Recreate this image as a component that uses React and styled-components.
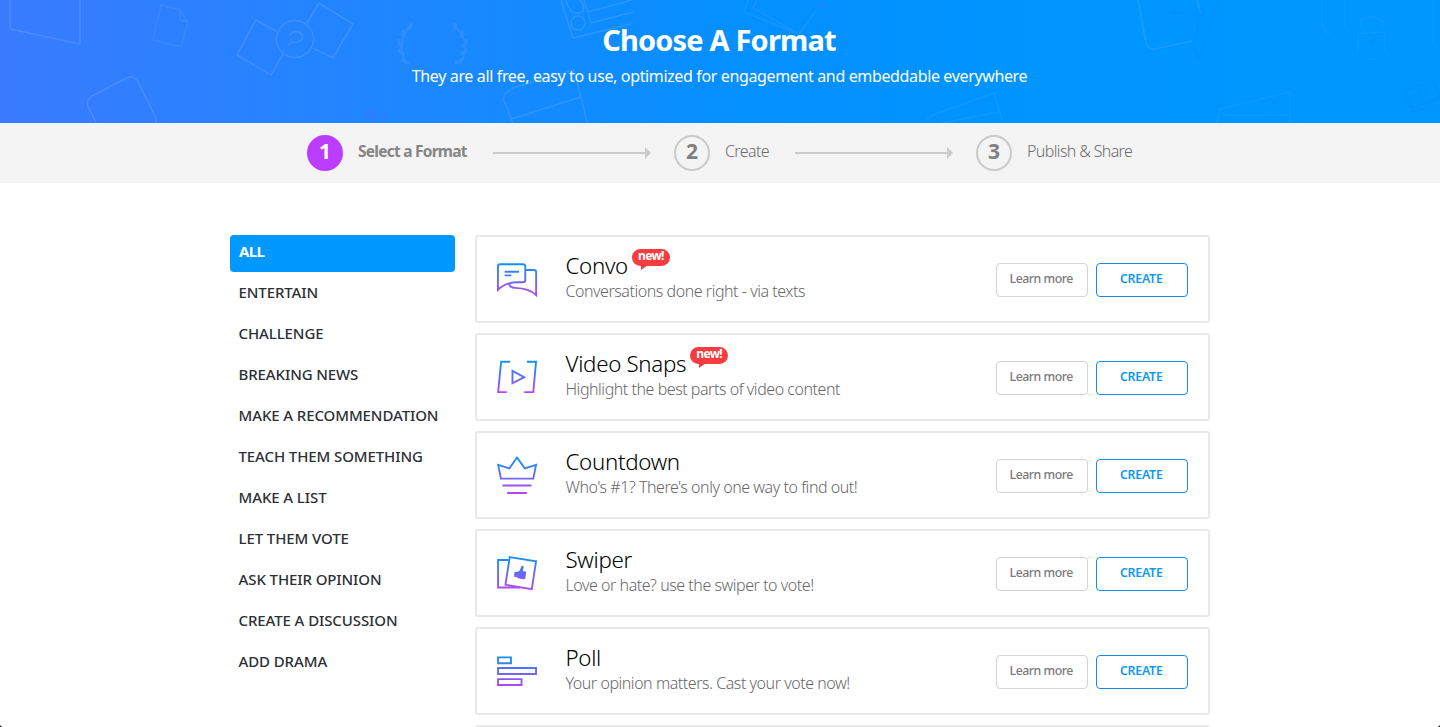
import React from "react";
import styled, { createGlobalStyle } from "styled-components";

const GlobalStyle = createGlobalStyle`
  * { box-sizing: border-box; }
  html, body { margin: 0; background: #000; }
  body { font-family: "Noto Sans", "Open Sans", sans-serif; }
`;

const Page = styled.div`
  height: 727px;
  overflow: hidden;
  background: #fff;
  border-radius: 0 0 3px 3px;
`;

const Header = styled.header`
  position: relative;
  height: 123px;
  padding-top: 20px;
  text-align: center;
  color: #fff;
  background: linear-gradient(90deg, #397bff 0, #2a81ff 220px, #1a88ff 450px, #058fff 720px, #0094ff 1000px, #0098ff 1440px);
`;

const Doodles = styled.svg`
  position: absolute;
  inset: 0;
  fill: none;
  stroke: #fff;
  stroke-width: 1.5;
`;

const Title = styled.h1`
  position: relative;
  margin: 0 0 4px;
  font-size: 29px;
  line-height: 40px;
  font-weight: 700;
  letter-spacing: -0.82px;
  text-indent: -2px;
`;

const Subtitle = styled.p`
  position: relative;
  margin: 0;
  font-size: 16px;
  line-height: 24px;
  letter-spacing: -0.36px;
  text-indent: -1px;
`;

const Steps = styled.nav`
  display: grid;
  grid-template-columns: 36px 150px 181px 36px 85px 181px 36px auto;
  align-items: start;
  height: 60px;
  padding: 12px 0 0 307px;
  background: #f4f4f4;
`;

const StepNumber = styled.span`
  width: 36px;
  height: 36px;
  border: 2px solid ${(p) => (p.$active ? "#bb3dff" : "#cbcbcb")};
  border-radius: 50%;
  background: ${(p) => (p.$active ? "#bb3dff" : "transparent")};
  color: ${(p) => (p.$active ? "#fff" : "#808080")};
  font-size: 21px;
  line-height: 28px;
  font-weight: 700;
  text-align: center;
`;

const StepLabel = styled.span`
  padding-left: 15px;
  font-size: ${(p) => (p.$active ? "15.5px" : "16px")};
  line-height: ${(p) => (p.$active ? "32px" : "33px")};
  font-weight: ${(p) => (p.$active ? 700 : 300)};
  letter-spacing: ${(p) => (p.$active ? "-0.75px" : "-0.62px")};
  color: ${(p) => (p.$active ? "#858585" : "#6c6c6c")};
  white-space: nowrap;
`;

const Arrow = styled.span`
  display: flex;
  align-items: center;
  width: 158px;
  height: 36px;

  &::before {
    content: "";
    flex: 1;
    height: 2px;
    background: #cbcbcb;
  }
  &::after {
    content: "";
    border: 6px solid transparent;
    border-left-color: #cbcbcb;
    border-right-width: 0;
  }
`;

const Content = styled.main`
  display: flex;
  gap: 20px;
  padding: 52px 230px 0;
`;

const Sidebar = styled.aside`
  display: flex;
  flex-direction: column;
  gap: 4px;
  flex: 0 0 225px;
`;

const Category = styled.a`
  height: 37px;
  padding-left: ${(p) => (p.$active ? "9px" : "8.5px")};
  border-radius: 4px;
  background: ${(p) => (p.$active ? "#0099ff" : "transparent")};
  color: ${(p) => (p.$active ? "#fff" : "#2d3035")};
  font-size: 15px;
  line-height: 33px;
  font-weight: ${(p) => (p.$active ? 700 : 500)};
  letter-spacing: ${(p) => (p.$active ? "-0.6px" : "-0.1px")};
  white-space: nowrap;
`;

const List = styled.section`
  display: flex;
  flex-direction: column;
  gap: 10px;
  flex: 1;
`;

const Card = styled.article`
  display: flex;
  flex: 0 0 88px;
  align-items: flex-start;
  padding: 15px 20px 0 18px;
  border: 2px solid #e9e9e9;
  border-radius: 3px;
`;

const IconBox = styled.svg`
  width: 44px;
  height: 44px;
  margin-top: 5px;
  fill: none;
  stroke-width: 1.9;
`;

const Copy = styled.div`
  flex: 1;
  padding-left: 26.5px;
`;

const Name = styled.h2`
  display: flex;
  gap: 4px;
  margin: 0;
  font-size: 22.3px;
  line-height: 27px;
  font-weight: 300;
  letter-spacing: -0.3px;
  color: #000;
`;

const Description = styled.p`
  margin: 0;
  font-size: 16px;
  line-height: 24px;
  font-weight: 300;
  letter-spacing: -0.46px;
  color: #686868;
`;

const NewBadge = styled.span`
  position: relative;
  width: 38px;
  height: 17px;
  margin-top: -3px;
  border-radius: 9px;
  background: #f63c3f;
  color: #fff;
  font-size: 12px;
  line-height: 14px;
  font-weight: 700;
  letter-spacing: -0.65px;
  text-align: center;

  &::after {
    content: "";
    position: absolute;
    left: 9px;
    top: 16px;
    border-top: 5px solid #f63c3f;
    border-right: 7px solid transparent;
  }
`;

const Actions = styled.div`
  display: flex;
  gap: 8px;
  padding-top: 11px;
`;

const Button = styled.button`
  width: 92px;
  height: 34px;
  padding: 0 1.5px 3px 0;
  border: 1px solid ${(p) => (p.$primary ? "#0e8df0" : "#d4d4d4")};
  border-radius: 4px;
  background: #fff;
  color: ${(p) => (p.$primary ? "#0e97f5" : "#7a7a7a")};
  font: ${(p) => (p.$primary ? 600 : 500)} 12.3px/29px "Noto Sans", sans-serif;
  letter-spacing: ${(p) => (p.$primary ? "-0.2px" : "-0.45px")};
`;

const icons = {
  convo: (
    <>
      <path d="M2.7 33V9.3Q2.7 7 5 7H28Q30.4 7 30.4 9.3V23Q30.4 25.3 28 25.3H23Q10 25.3 2.7 33Z" />
      <path d="M30.4 12.9H39.2Q41.4 12.9 41.4 15V38.3Q34.500 31.500 20 31Q14.500 30.800 14 27" />
      <path d="M9.500 14.700H24M9.500 18.300H16.300" />
    </>
  ),
  video: (
    <>
      <path d="M15 6.500H5.900L2.900 37.300H11.700M32 6.500H41.300L38.500 37.300H29.300" />
      <path d="M17.400 15.800L29.300 22.200L17.400 28.400Z" />
    </>
  ),
  countdown: (
    <path d="M2.900 11.700L14.300 15.300L22 4.300L29.900 15.300L41.300 11.700L38.500 25.700H5.700ZM7.300 32.700H36.700M12 40.200H32" />
  ),
  swiper: (
    <>
      <path d="M13.500 8.800H2.800V36.700H25" />
      <path d="M14.600 5.900L41.300 10.200L37 38.300L10.300 34Z" />
      <path
        d="M19.500 20.700L22.200 21L24.800 19.400L26.700 14.700Q28.800 14.300 28.700 16L27.900 20L31.300 20.700L30.500 27Q29.800 28.600 28.300 28.300L23 27.200L22 26.200L19 25.900Z"
        fill="url(#ink)"
        stroke="none"
      />
    </>
  ),
  poll: (
    <path d="M2.800 8.200H15.900V14.200H2.800ZM2.800 19H41.300V25H2.800ZM2.800 30.200H26.600V36.200H2.800Z" />
  ),
};

const formats = [
  { icon: "convo", name: "Convo", text: "Conversations done right - via texts", isNew: true },
  { icon: "video", name: "Video Snaps", text: "Highlight the best parts of video content", isNew: true },
  { icon: "countdown", name: "Countdown", text: "Who's #1? There's only one way to find out!" },
  { icon: "swiper", name: "Swiper", text: "Love or hate? use the swiper to vote!" },
  { icon: "poll", name: "Poll", text: "Your opinion matters. Cast your vote now!" },
];

const categories = [
  "ALL",
  "ENTERTAIN",
  "CHALLENGE",
  "BREAKING NEWS",
  "MAKE A RECOMMENDATION",
  "TEACH THEM SOMETHING",
  "MAKE A LIST",
  "LET THEM VOTE",
  "ASK THEIR OPINION",
  "CREATE A DISCUSSION",
  "ADD DRAMA",
];

function HeaderArt() {
  return (
    <Doodles width="1440" height="123" viewBox="0 0 1440 123" aria-hidden="true">
      <g opacity="0.11">
        <path d="M10 0V29L80 44V0" />
        <path d="M161 5L180 10L188 22L181 47L153 40ZM180 10L180 20L188 22" opacity="0.6" />
        <path d="M276 31L256 20L237 55L271 75L283 54M307 23L319 3L353 24L333 58L313 48" />
        <circle cx="295" cy="39" r="18.500" />
        <path d="M290 35Q293 30 299 32Q305 35 301 40Q298 43 293 42Q289 42 289 46" />
        <path d="M96 123L88 106Q86 100 92 96L127 78Q134 75 138 82L156 118V123" />
      </g>
      <g opacity="0.1">
        <g opacity="0.7">
          <path d="M413 23Q393 42 407 64M452 23Q474 42 460 64" strokeWidth="2" />
          <path
            d="M411 23q-3 3 0 6M404 30q-4 4 1 7M399 39q-2 5 4 7M399 49q0 5 6 5M403 59q2 5 7 3M454 23q3 3 0 6M461 30q4 4-1 7M466 39q2 5-4 7M466 49q0 5-6 5M462 59q-2 5-7 3"
            strokeWidth="3"
          />
        </g>
        <path d="M561 0L573 38L631 24M566 0Q570 17 582 12Q586 7 580 0M588 12L632 0M588 12L584 0M591 23L633 12M591 23L588 14" />
        <circle cx="578" cy="23" r="7" />
        <path d="M513 123L504 101Q502 97 506 93L513 88L574 70L581 97L511 119M581 97L587 123" />
      </g>
      <g opacity="0.06">
        <path d="M748 0L744 12L799 34L816 11M757 0L753 8L799 34" />
        <path d="M927 120L933 115L994 93L1002 120M942 123L999 112" />
      </g>
      <g opacity="0.09">
        <path d="M1138 0L1146 43Q1148 50 1155 49L1192 41M1197 0L1201 14" />
      </g>
      <g opacity="0.045">
        <path d="M1217 123L1220 109L1290 92V123M1222 115H1288M1433 0V44M1322 0V25Q1324 33 1332 34M1345 0V29" />
        <path d="M1361 29V20L1371 16L1383 21V29M1358 53V34L1385 32V53M1368 59H1377" />
      </g>
      <g opacity="0.08" stroke="#0066dd">
        <path d="M1167 13H1182M1174 6V20M1203 0L1194 44L1198 60L1206 40L1219 0" />
        <path d="M1368 36Q1371 31 1375 36Q1375 40 1371 44M1371 48V50" />
        <path d="M1405 90L1434 82L1440 98M1405 90L1411 108L1440 98M1411 112L1440 105" />
        <circle cx="1423" cy="95" r="3" />
      </g>
      <g stroke="none" fill="#7a55ff" opacity="0.13">
        <circle cx="371" cy="114" r="6" />
        <circle cx="384" cy="116" r="3" />
        <circle cx="822" cy="5" r="4" />
      </g>
    </Doodles>
  );
}

function Format({ icon, name, text, isNew }) {
  return (
    <Card>
      <IconBox viewBox="-0.3 -0.3 44.6 44.6" stroke="url(#ink)" aria-hidden="true">
        {icons[icon]}
      </IconBox>
      <Copy>
        <Name>
          {name}
          {isNew && <NewBadge>new!</NewBadge>}
        </Name>
        <Description>{text}</Description>
      </Copy>
      <Actions>
        <Button>Learn more</Button>
        <Button $primary>CREATE</Button>
      </Actions>
    </Card>
  );
}

const GradientDefs = styled.svg`
  position: absolute;
  width: 0;
  height: 0;
`;

export default function App() {
  return (
    <Page>
      <GlobalStyle />
      <GradientDefs aria-hidden="true">
        <linearGradient id="ink" gradientUnits="userSpaceOnUse" x1="0" y1="5" x2="0" y2="39">
          <stop offset="0" stopColor="#0b95f5" />
          <stop offset="1" stopColor="#b845f5" />
        </linearGradient>
      </GradientDefs>
      <Header>
        <HeaderArt />
        <Title>Choose A Format</Title>
        <Subtitle>They are all free, easy to use, optimized for engagement and embeddable everywhere</Subtitle>
      </Header>
      <Steps>
        <StepNumber $active>1</StepNumber>
        <StepLabel $active>Select a Format</StepLabel>
        <Arrow />
        <StepNumber>2</StepNumber>
        <StepLabel>Create</StepLabel>
        <Arrow />
        <StepNumber>3</StepNumber>
        <StepLabel>Publish &amp; Share</StepLabel>
      </Steps>
      <Content>
        <Sidebar>
          {categories.map((c, i) => (
            <Category key={c} $active={i === 0}>
              {c}
            </Category>
          ))}
        </Sidebar>
        <List>
          {formats.map((f) => (
            <Format key={f.name} {...f} />
          ))}
          <Card />
        </List>
      </Content>
    </Page>
  );
}
